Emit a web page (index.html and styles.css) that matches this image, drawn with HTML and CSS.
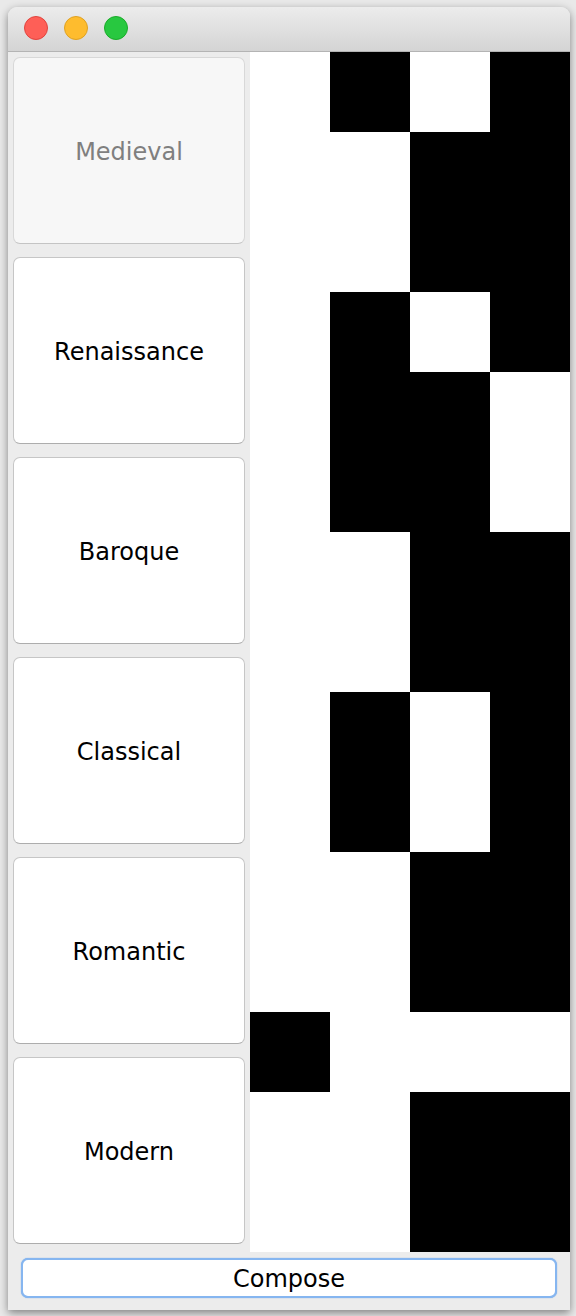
FILE: index.html
```html
<!DOCTYPE html>
<html lang="en">
<head>
  <meta charset="UTF-8" />
  <title>Composer</title>
  <link rel="stylesheet" href="styles.css">
</head>
<body>
  <div class="window">
    <div class="titlebar">
      <span class="light red"></span>
      <span class="light yellow"></span>
      <span class="light green"></span>
    </div>

    <div class="content">
      <div class="eras">
        <button class="era" disabled>Medieval</button>
        <button class="era">Renaissance</button>
        <button class="era">Baroque</button>
        <button class="era">Classical</button>
        <button class="era">Romantic</button>
        <button class="era">Modern</button>
      </div>

      <div class="roll">
        <div></div><div class="on"></div><div></div><div class="on"></div>
        <div></div><div></div><div class="on"></div><div class="on"></div>
        <div></div><div></div><div class="on"></div><div class="on"></div>
        <div></div><div class="on"></div><div></div><div class="on"></div>
        <div></div><div class="on"></div><div class="on"></div><div></div>
        <div></div><div class="on"></div><div class="on"></div><div></div>
        <div></div><div></div><div class="on"></div><div class="on"></div>
        <div></div><div></div><div class="on"></div><div class="on"></div>
        <div></div><div class="on"></div><div></div><div class="on"></div>
        <div></div><div class="on"></div><div></div><div class="on"></div>
        <div></div><div></div><div class="on"></div><div class="on"></div>
        <div></div><div></div><div class="on"></div><div class="on"></div>
        <div class="on"></div><div></div><div></div><div></div>
        <div></div><div></div><div class="on"></div><div class="on"></div>
        <div></div><div></div><div class="on"></div><div class="on"></div>
      </div>
    </div>

    <div class="footer">
      <button class="compose">Compose</button>
    </div>
  </div>
</body>
</html>
```

FILE: styles.css
```css
body {
  margin: 0;
  background: #e9e9e9;
  font-family: 'DejaVu Sans', sans-serif;
}

.window {
  margin: 7px 6px 6px 8px;
  width: 562px;
  height: 1303px;
  background: #ececec;
  border-radius: 9px 9px 0 0;
  box-shadow: 0 3px 9px rgba(0, 0, 0, 0.45);
  display: flex;
  flex-direction: column;
  overflow: hidden;
}

.titlebar {
  height: 44px;
  flex: none;
  display: flex;
  align-items: center;
  gap: 16px;
  padding-left: 16px;
  background: linear-gradient(#ececec, #d4d4d4);
  border-bottom: 1px solid #b4b4b4;
}

.light {
  width: 22px;
  height: 22px;
  border-radius: 50%;
  margin-top: -2px;
}

.red {
  background: #fe5f57;
  border: 1px solid #e0443e;
}

.yellow {
  background: #febc2e;
  border: 1px solid #dea123;
}

.green {
  background: #28c840;
  border: 1px solid #1aab29;
}

.content {
  display: flex;
  height: 1200px;
  flex: none;
}

.eras {
  width: 232px;
  padding: 5px 5px 0;
  display: flex;
  flex-direction: column;
  gap: 13px;
}

.era {
  height: 187px;
  flex: none;
  background: #fff;
  border: 1px solid #c6c6c6;
  border-bottom-color: #adadad;
  border-radius: 7px;
  font-family: 'DejaVu Sans', sans-serif;
  font-size: 24px;
  color: #000;
  padding: 2px 0 0;
}

.era:disabled {
  background: #f7f7f7;
  border-color: #d8d8d8;
  border-bottom-color: #c4c4c4;
  color: #7f7f7f;
}

.roll {
  width: 320px;
  display: grid;
  grid-template-columns: repeat(4, 80px);
  grid-auto-rows: 80px;
  background: #fff;
}

.roll .on {
  background: #000;
}

.footer {
  padding: 6px 13px 0;
}

.compose {
  width: 100%;
  height: 40px;
  background: #fff;
  border: 2px solid #86b6f0;
  border-radius: 7px;
  box-shadow: 0 0 1px #5f9cea;
  font-family: 'DejaVu Sans', sans-serif;
  font-size: 24px;
  color: #000;
  padding: 2px 0 0;
}
```
